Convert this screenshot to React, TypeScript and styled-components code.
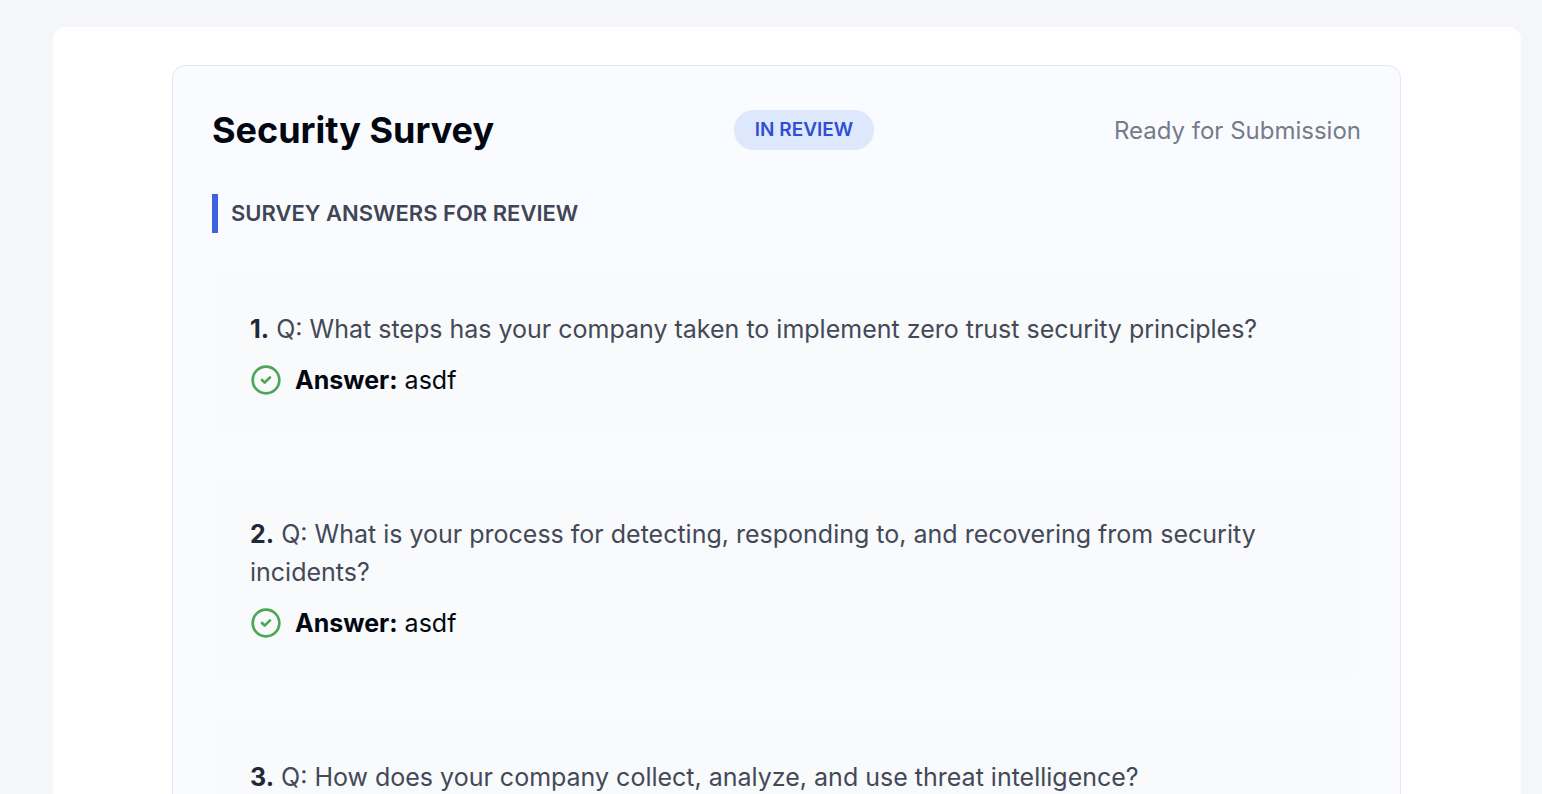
import React from "react";
import styled, { createGlobalStyle } from "styled-components";
import { CircleCheck } from "lucide-react";

const GlobalStyle = createGlobalStyle`
  * { box-sizing: border-box; }
  body {
    margin: 0;
    background: #f5f6fa;
    font-family: Inter, "Liberation Sans", sans-serif;
    font-size: 25px;
    color: #030712;
  }
  h1, h2, p, ol { margin: 0; padding: 0; }
`;

const Viewport = styled.div`
  min-height: 100vh;
  padding: 27px 21px 0 53px;
`;

const Page = styled.main`
  padding: 38px 120px 40px 119px;
  background: #ffffff;
  border-radius: 13px;
`;

const SurveyCard = styled.section`
  padding: 38px 39px;
  background: #fafbff;
  border: 1px solid #e2e6f0;
  border-radius: 13px;
`;

const CardHeader = styled.header`
  display: flex;
  align-items: center;
  justify-content: space-between;
`;

const Title = styled.h1`
  font-size: 36px;
  line-height: 52px;
  font-weight: 700;
`;

const StatusBadge = styled.span`
  padding: 0 21px;
  border-radius: 20px;
  background: #dde8fc;
  color: #304fd0;
  font-size: 19px;
  line-height: 40px;
  font-weight: 600;
`;

const StatusNote = styled.span`
  color: #757b89;
  font-size: 24px;
`;

const SectionTitle = styled.h2`
  margin-top: 38px;
  padding-left: 13px;
  border-left: 6px solid #3b63e0;
  color: #3f4655;
  font-size: 22px;
  line-height: 39px;
  font-weight: 600;
`;

const AnswerList = styled.ol`
  display: flex;
  flex-direction: column;
  gap: 39px;
  margin-top: 38px;
  list-style: none;
`;

const AnswerItem = styled.li`
  padding: 39px 38px 38px;
  border-radius: 13px;
  background: #f9fafb;
`;

const Question = styled.p`
  color: #434958;
  line-height: 38px;
`;

const Num = styled.strong`
  color: #1f2937;
  font-weight: 700;
`;

const Answer = styled.div`
  display: flex;
  align-items: center;
  gap: 13px;
  margin-top: 13px;
  line-height: 38px;
`;

const CheckIcon = styled(CircleCheck)`
  flex: none;
  width: 32px;
  height: 32px;
  color: #4ba657;
`;

const AnswerLabel = styled.strong`
  font-weight: 700;
`;

const answers = [
  { question: "What steps has your company taken to implement zero trust security principles?", answer: "asdf" },
  { question: "What is your process for detecting, responding to, and recovering from security incidents?", answer: "asdf" },
  { question: "How does your company collect, analyze, and use threat intelligence?", answer: "asdf" },
];

export default function App() {
  return (
    <>
      <GlobalStyle />
      <Viewport>
        <Page>
          <SurveyCard>
            <CardHeader>
              <Title>Security Survey</Title>
              <StatusBadge>IN REVIEW</StatusBadge>
              <StatusNote>Ready for Submission</StatusNote>
            </CardHeader>
            <SectionTitle>SURVEY ANSWERS FOR REVIEW</SectionTitle>
            <AnswerList>
              {answers.map((item, index) => (
                <AnswerItem key={item.question}>
                  <Question>
                    <Num>{index + 1}.</Num> Q: {item.question}
                  </Question>
                  <Answer>
                    <CheckIcon aria-hidden="true" />
                    <span>
                      <AnswerLabel>Answer:</AnswerLabel> {item.answer}
                    </span>
                  </Answer>
                </AnswerItem>
              ))}
            </AnswerList>
          </SurveyCard>
        </Page>
      </Viewport>
    </>
  );
}
